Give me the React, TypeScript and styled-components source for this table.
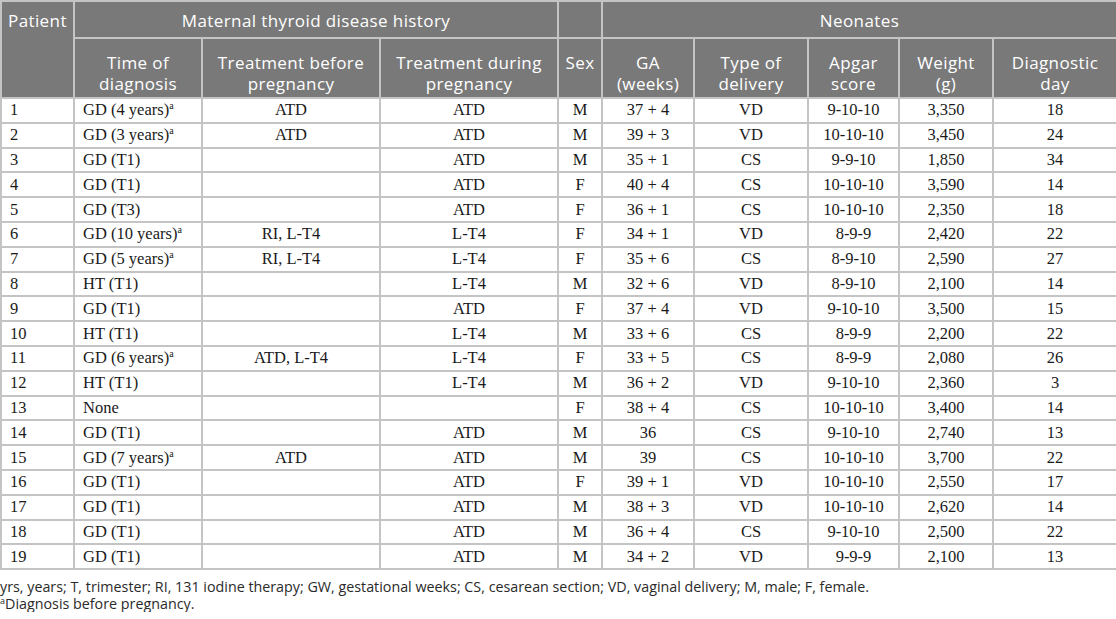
import styled, { createGlobalStyle } from "styled-components";

type Row = {
  id: number;
  diagnosis: string;
  before?: string;
  during?: string;
  sex: string;
  ga: string;
  delivery: string;
  apgar: string;
  weight: string;
  day: string;
  note?: boolean;
};

const rows: Row[] = [
  { id: 1, diagnosis: "GD (4 years)", note: true, before: "ATD", during: "ATD", sex: "M", ga: "37 + 4", delivery: "VD", apgar: "9-10-10", weight: "3,350", day: "18" },
  { id: 2, diagnosis: "GD (3 years)", note: true, before: "ATD", during: "ATD", sex: "M", ga: "39 + 3", delivery: "VD", apgar: "10-10-10", weight: "3,450", day: "24" },
  { id: 3, diagnosis: "GD (T1)", during: "ATD", sex: "M", ga: "35 + 1", delivery: "CS", apgar: "9-9-10", weight: "1,850", day: "34" },
  { id: 4, diagnosis: "GD (T1)", during: "ATD", sex: "F", ga: "40 + 4", delivery: "CS", apgar: "10-10-10", weight: "3,590", day: "14" },
  { id: 5, diagnosis: "GD (T3)", during: "ATD", sex: "F", ga: "36 + 1", delivery: "CS", apgar: "10-10-10", weight: "2,350", day: "18" },
  { id: 6, diagnosis: "GD (10 years)", note: true, before: "RI, L-T4", during: "L-T4", sex: "F", ga: "34 + 1", delivery: "VD", apgar: "8-9-9", weight: "2,420", day: "22" },
  { id: 7, diagnosis: "GD (5 years)", note: true, before: "RI, L-T4", during: "L-T4", sex: "F", ga: "35 + 6", delivery: "CS", apgar: "8-9-10", weight: "2,590", day: "27" },
  { id: 8, diagnosis: "HT (T1)", during: "L-T4", sex: "M", ga: "32 + 6", delivery: "VD", apgar: "8-9-10", weight: "2,100", day: "14" },
  { id: 9, diagnosis: "GD (T1)", during: "ATD", sex: "F", ga: "37 + 4", delivery: "VD", apgar: "9-10-10", weight: "3,500", day: "15" },
  { id: 10, diagnosis: "HT (T1)", during: "L-T4", sex: "M", ga: "33 + 6", delivery: "CS", apgar: "8-9-9", weight: "2,200", day: "22" },
  { id: 11, diagnosis: "GD (6 years)", note: true, before: "ATD, L-T4", during: "L-T4", sex: "F", ga: "33 + 5", delivery: "CS", apgar: "8-9-9", weight: "2,080", day: "26" },
  { id: 12, diagnosis: "HT (T1)", during: "L-T4", sex: "M", ga: "36 + 2", delivery: "VD", apgar: "9-10-10", weight: "2,360", day: "3" },
  { id: 13, diagnosis: "None", sex: "F", ga: "38 + 4", delivery: "CS", apgar: "10-10-10", weight: "3,400", day: "14" },
  { id: 14, diagnosis: "GD (T1)", during: "ATD", sex: "M", ga: "36", delivery: "CS", apgar: "9-10-10", weight: "2,740", day: "13" },
  { id: 15, diagnosis: "GD (7 years)", note: true, before: "ATD", during: "ATD", sex: "M", ga: "39", delivery: "CS", apgar: "10-10-10", weight: "3,700", day: "22" },
  { id: 16, diagnosis: "GD (T1)", during: "ATD", sex: "F", ga: "39 + 1", delivery: "VD", apgar: "10-10-10", weight: "2,550", day: "17" },
  { id: 17, diagnosis: "GD (T1)", during: "ATD", sex: "M", ga: "38 + 3", delivery: "VD", apgar: "10-10-10", weight: "2,620", day: "14" },
  { id: 18, diagnosis: "GD (T1)", during: "ATD", sex: "M", ga: "36 + 4", delivery: "CS", apgar: "9-10-10", weight: "2,500", day: "22" },
  { id: 19, diagnosis: "GD (T1)", during: "ATD", sex: "M", ga: "34 + 2", delivery: "VD", apgar: "9-9-9", weight: "2,100", day: "13" },
];

const widths = [73, 128, 178, 178, 44, 92, 114, 91, 94, 124];

function App() {
  return (
    <>
      <GlobalStyle />
      <Page>
        <Table>
          <colgroup>
            {widths.map((w, i) => (
              <col key={i} style={{ width: w }} />
            ))}
          </colgroup>
          <thead>
            <TopRow>
              <Th rowSpan={2} $align="left">Patient</Th>
              <Th colSpan={3}>Maternal thyroid disease history</Th>
              <Th />
              <Th colSpan={5}>Neonates</Th>
            </TopRow>
            <SubRow>
              <Th $sub>Time of<br />diagnosis</Th>
              <Th $sub>Treatment before<br />pregnancy</Th>
              <Th $sub>Treatment during<br />pregnancy</Th>
              <Th $sub>Sex</Th>
              <Th $sub>GA<br />(weeks)</Th>
              <Th $sub>Type of<br />delivery</Th>
              <Th $sub>Apgar<br />score</Th>
              <Th $sub>Weight<br />(g)</Th>
              <Th $sub>Diagnostic<br />day</Th>
            </SubRow>
          </thead>
          <tbody>
            {rows.map((r) => (
              <BodyRow key={r.id}>
                <Td $align="left">{r.id}</Td>
                <Td $align="left">
                  {r.diagnosis}
                  {r.note && <Sup>a</Sup>}
                </Td>
                <Td>{r.before}</Td>
                <Td>{r.during}</Td>
                <Td>{r.sex}</Td>
                <Td>{r.ga}</Td>
                <Td>{r.delivery}</Td>
                <Td>{r.apgar}</Td>
                <Td>{r.weight}</Td>
                <Td>{r.day}</Td>
              </BodyRow>
            ))}
          </tbody>
        </Table>
        <Notes>
          <Note>
            yrs, years; T, trimester; RI, 131 iodine therapy; GW, gestational weeks; CS, cesarean section; VD, vaginal delivery; M, male; F, female.
          </Note>
          <Note>
            <NoteSup>a</NoteSup>Diagnosis before pregnancy.
          </Note>
        </Notes>
      </Page>
    </>
  );
}

const GlobalStyle = createGlobalStyle`
  body {
    margin: 0;
    background: #ffffff;
  }
`;

const Page = styled.div`
  width: 1116px;
  display: flex;
  flex-direction: column;
`;

const Table = styled.table`
  width: 1116px;
  table-layout: fixed;
  border-collapse: collapse;
  border: 2px solid #c2c2c2;
`;

const TopRow = styled.tr`
  height: 37px;
`;

const SubRow = styled.tr`
  height: 60px;
`;

const BodyRow = styled.tr`
  height: 24.8px;
`;

const Th = styled.th<{ $align?: string; $sub?: boolean }>`
  background: #797979;
  color: #ffffff;
  font-family: "Open Sans", "Noto Sans", sans-serif;
  font-weight: 400;
  font-size: 17px;
  line-height: 21px;
  letter-spacing: 0.4px;
  text-align: ${(p) => p.$align || "center"};
  vertical-align: top;
  padding: ${(p) => (p.$sub ? "13px 1px 0" : "8px 6px 0")};
  border: 2px solid #c4c4c4;
  white-space: nowrap;
`;

const Td = styled.td<{ $align?: string }>`
  font-family: "Liberation Serif", "Times New Roman", serif;
  font-size: 16.5px;
  line-height: 20px;
  color: #1a1a1a;
  text-align: ${(p) => p.$align || "center"};
  vertical-align: middle;
  padding: 0 8px;
  border: 2px solid #c4c4c4;
  white-space: nowrap;
`;

const Sup = styled.sup`
  font-size: 10px;
  line-height: 0;
  vertical-align: 6px;
`;

const Notes = styled.div`
  display: flex;
  flex-direction: column;
  padding-top: 8px;
`;

const Note = styled.p`
  margin: 0;
  font-family: "Open Sans", "Noto Sans", sans-serif;
  font-size: 14.3px;
  line-height: 17px;
  color: #2a2a2a;
`;

const NoteSup = styled.sup`
  font-size: 9px;
  line-height: 0;
  vertical-align: 5px;
`;

export default App;
